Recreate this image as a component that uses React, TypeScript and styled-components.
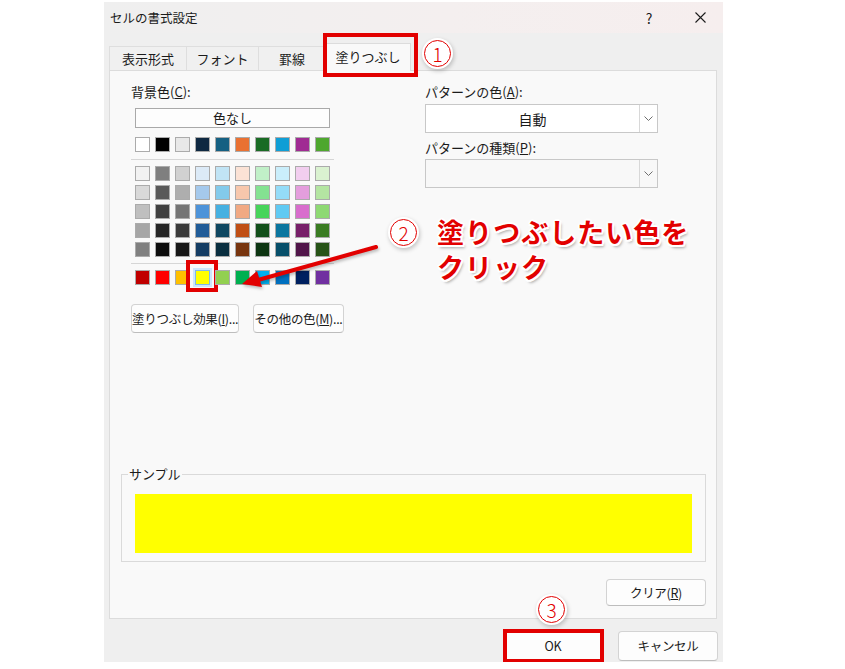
import React from 'react'
import styled, { createGlobalStyle, css } from 'styled-components'

const RED = '#e20000'

const themeColors = [
  ['#FFFFFF', '#F2F2F2', '#D9D9D9', '#BFBFBF', '#A6A6A6', '#808080'],
  ['#000000', '#7F7F7F', '#595959', '#404040', '#262626', '#0D0D0D'],
  ['#E8E8E8', '#D1D1D1', '#AEAEAE', '#757575', '#3A3A3A', '#171717'],
  ['#0E2841', '#DCEAF7', '#A5C9EC', '#4D93D9', '#215C98', '#153D64'],
  ['#156082', '#C1E4F5', '#83CAEB', '#45B0E1', '#0F4761', '#0A2F40'],
  ['#E97132', '#FBE2D5', '#F7C7AC', '#F1A983', '#C04F15', '#78350F'],
  ['#196B24', '#C1F0C8', '#84E291', '#47D45A', '#124F1A', '#0D3512'],
  ['#0F9ED5', '#CAEEFB', '#94DCF8', '#60CAF3', '#0B769F', '#074F6A'],
  ['#A02B93', '#F2CEEF', '#E49EDD', '#D86DCD', '#772069', '#501549'],
  ['#4EA72E', '#DAF2D0', '#B4E5A2', '#8ED973', '#3A7C22', '#275317'],
]

const standardColors = [
  '#C00000', '#FF0000', '#FFC000', '#FFFF00', '#92D050',
  '#00B050', '#00B0F0', '#0070C0', '#002060', '#7030A0',
]

const GlobalStyle = createGlobalStyle`
  html, body {
    margin: 0;
    background: #fff;
  }
  body {
    font-family: 'Noto Sans CJK JP', 'Noto Sans', sans-serif;
    color: #1b1b1b;
  }
`

const Page = styled.div`
  padding: 2px 0 0 104px;
`

const Dialog = styled.div`
  position: relative;
  width: 619px;
  height: 660px;
  display: flex;
  flex-direction: column;
  background: #efefef;
  font-size: 13px;
  line-height: 16px;
`

const TitleBar = styled.div`
  height: 31px;
  display: flex;
  align-items: center;
  padding-left: 6px;
  background: linear-gradient(90deg, #efefef 0%, #f4efef 55%, #f6eeee 100%);
`

const Title = styled.span`
  flex: 1;
  font-size: 12.5px;
`

const TitleButton = styled.div<{ $w: number }>`
  width: ${p => p.$w}px;
  height: 31px;
  display: flex;
  align-items: center;
  justify-content: center;
  font-size: 14px;
`

const TabStrip = styled.div`
  height: 37px;
  box-sizing: border-box;
  display: flex;
  align-items: flex-end;
  padding: 10px 0 0 5px;
`

const Tab = styled.div<{ $w: number; $active?: boolean }>`
  position: relative;
  box-sizing: border-box;
  width: ${p => p.$w}px;
  height: 24px;
  margin-right: -1px;
  display: flex;
  align-items: center;
  justify-content: center;
  border: 1px solid #dedede;
  border-bottom: none;
  background: #f0f0f0;
  ${p =>
    p.$active &&
    css`
      height: 28px;
      margin-bottom: -1px;
      padding-bottom: 1px;
      background: #f9f9f9;
      border-color: #dcdcdc;
      z-index: 1;

      &::after {
        content: '';
        position: absolute;
        left: -3px;
        right: -8px;
        top: -11px;
        bottom: -6px;
        border: 4px solid ${RED};
      }
    `}
`

const Panel = styled.div`
  flex: 1;
  margin: 0 6px 0 5px;
  display: flex;
  flex-direction: column;
  padding: 0 10px 12px 11px;
  background: #f9f9f9;
  border: 1px solid #dcdcdc;
`

const TopArea = styled.div`
  display: grid;
  grid-template-columns: 204px 233px;
  column-gap: 90px;
  align-items: start;
  padding: 13px 0 0 10px;
`

const Column = styled.div`
  display: flex;
  flex-direction: column;
`

const Label = styled.div<{ $gap?: number }>`
  margin-top: ${p => p.$gap ?? 0}px;
  height: 16px;
  white-space: nowrap;
`

const NoColorButton = styled.div`
  box-sizing: border-box;
  width: 195px;
  height: 20px;
  margin: 8px 0 0 4px;
  display: flex;
  align-items: center;
  justify-content: center;
  background: #fdfdfd;
  border: 1px solid #a9a9a9;
`

const SwatchGrid = styled.div<{ $gap: number }>`
  margin: ${p => p.$gap}px 0 0 4px;
  display: grid;
  grid-template-columns: repeat(10, 15px);
  grid-auto-rows: 15px;
  column-gap: 5px;
  row-gap: 4px;
`

const Swatch = styled.div<{ $color: string; $picked?: boolean }>`
  position: relative;
  box-sizing: border-box;
  background: ${p => p.$color};
  border: 1px solid #ababab;
  ${p =>
    p.$picked &&
    css`
      border-color: #7fb8ea;
      box-shadow: 0 0 0 2px #cde6fb;

      &::after {
        content: '';
        position: absolute;
        left: -10px;
        right: -9px;
        top: -11px;
        bottom: -8px;
        border: 4px solid ${RED};
      }
    `}
`

const Separator = styled.div<{ $gap?: number }>`
  width: 203px;
  height: 1px;
  margin-top: ${p => p.$gap ?? 7}px;
  background: #d6d6d6;
`

const ButtonRow = styled.div`
  display: flex;
  gap: 14px;
  margin-top: 19px;
`

const PushButton = styled.div<{ $w: number; $h?: number }>`
  position: relative;
  box-sizing: border-box;
  width: ${p => p.$w}px;
  height: ${p => p.$h ?? 29}px;
  display: flex;
  align-items: center;
  justify-content: center;
  background: #fdfdfd;
  border: 1px solid #d3d3d3;
  border-bottom-color: #bdbdbd;
  border-radius: 4px;
  font-size: 12.5px;
  letter-spacing: -0.3px;
  white-space: nowrap;
`

const Select = styled.div<{ $disabled?: boolean; $gap: number }>`
  box-sizing: border-box;
  height: 29px;
  margin-top: ${p => p.$gap}px;
  display: flex;
  background: ${p => (p.$disabled ? '#f8f8f8' : '#ffffff')};
  border: 1px solid #c8c8c8;
`

const SelectValue = styled.div`
  flex: 1;
  display: flex;
  align-items: center;
  justify-content: center;
  font-size: 14px;
`

const SelectArrow = styled.div`
  width: 17px;
  display: flex;
  align-items: center;
  justify-content: center;
  border-left: 1px solid #d8d8d8;
`

const SampleBox = styled.fieldset`
  margin: auto 0 0;
  padding: 0 13px 8px;
  border: 1px solid #dadada;
  min-width: 0;

  & > legend {
    padding: 0 1px;
    margin-left: -7px;
    line-height: 16px;
  }
`

const SampleFill = styled.div`
  height: 59px;
  margin-top: 12px;
  background: #ffff00;
`

const ClearRow = styled.div`
  display: flex;
  justify-content: flex-end;
  margin-top: 17px;
`

const Footer = styled.div`
  height: 43px;
  box-sizing: border-box;
  display: flex;
  justify-content: flex-end;
  gap: 15px;
  padding: 12px 5px 0 0;
`

const MarkedButton = styled(PushButton)`
  &::after {
    content: '';
    position: absolute;
    left: -1px;
    right: -2px;
    top: -3px;
    bottom: -3px;
    border: 4px solid ${RED};
  }
`

const Marker = styled.div<{ $x: number; $y: number }>`
  position: absolute;
  left: ${p => p.$x}px;
  top: ${p => p.$y}px;
  box-sizing: border-box;
  width: 27px;
  height: 27px;
  display: flex;
  align-items: center;
  justify-content: center;
  border-radius: 50%;
  border: 1.5px solid ${RED};
  background: #fff;
  color: ${RED};
  font-size: 19px;
  font-weight: 300;
  line-height: 1;
  box-shadow: 0 0 0 2px #fff, 1px 2px 4px 2px rgba(0, 0, 0, 0.22);
`

const Callout = styled.div`
  position: absolute;
  left: 333px;
  top: 212px;
  color: ${RED};
  font-size: 27px;
  font-weight: 700;
  line-height: 35px;
  letter-spacing: 1px;
  white-space: nowrap;
  text-shadow: -2px 0 0 #fff, 2px 0 0 #fff, 0 -2px 0 #fff, 0 2px 0 #fff,
    -1.5px -1.5px 0 #fff, 1.5px -1.5px 0 #fff, -1.5px 1.5px 0 #fff,
    1.5px 1.5px 0 #fff, 2px 3px 3px rgba(0, 0, 0, 0.35);
`

const Arrow = styled.svg`
  position: absolute;
  left: 126px;
  top: 238px;
  overflow: visible;
  filter: drop-shadow(1px 2px 1.5px rgba(0, 0, 0, 0.25));
`

const Chevron = () => (
  <svg width="9" height="5" viewBox="0 0 9 5">
    <path d="M0.5 0.5 L4.5 4.5 L8.5 0.5" fill="none" stroke="#6e6e6e" strokeWidth="1" />
  </svg>
)

const App = () => (
  <Page>
    <GlobalStyle />
    <Dialog>
      <TitleBar>
        <Title>セルの書式設定</Title>
        <TitleButton $w={56}>?</TitleButton>
        <TitleButton $w={46}>
          <svg width="11" height="11" viewBox="0 0 11 11">
            <path d="M0.5 0.5 L10.5 10.5 M10.5 0.5 L0.5 10.5" stroke="#1b1b1b" strokeWidth="1.1" />
          </svg>
        </TitleButton>
      </TitleBar>

      <TabStrip>
        <Tab $w={78}>表示形式</Tab>
        <Tab $w={73}>フォント</Tab>
        <Tab $w={68}>罫線</Tab>
        <Tab $w={86} $active>
          塗りつぶし
        </Tab>
      </TabStrip>

      <Panel>
        <TopArea>
          <Column>
            <Label>
              背景色(<u>C</u>):
            </Label>
            <NoColorButton>色なし</NoColorButton>
            <SwatchGrid $gap={9}>
              {themeColors.map(c => (
                <Swatch key={c[0]} $color={c[0]} />
              ))}
            </SwatchGrid>
            <Separator />
            <SwatchGrid $gap={6}>
              {[1, 2, 3, 4, 5].map(row =>
                themeColors.map(c => <Swatch key={`${row}-${c[0]}`} $color={c[row]} />)
              )}
            </SwatchGrid>
            <Separator $gap={6} />
            <SwatchGrid $gap={6}>
              {standardColors.map(c => (
                <Swatch key={c} $color={c} $picked={c === '#FFFF00'} />
              ))}
            </SwatchGrid>
            <ButtonRow>
              <PushButton $w={134}>
                塗りつぶし効果(<u>I</u>)...
              </PushButton>
              <PushButton $w={118}>
                その他の色(<u>M</u>)...
              </PushButton>
            </ButtonRow>
          </Column>

          <Column>
            <Label>
              パターンの色(<u>A</u>):
            </Label>
            <Select $gap={4}>
              <SelectValue>自動</SelectValue>
              <SelectArrow>
                <Chevron />
              </SelectArrow>
            </Select>
            <Label $gap={7}>
              パターンの種類(<u>P</u>):
            </Label>
            <Select $gap={3} $disabled>
              <SelectValue />
              <SelectArrow>
                <Chevron />
              </SelectArrow>
            </Select>
          </Column>
        </TopArea>

        <SampleBox>
          <legend>サンプル</legend>
          <SampleFill />
        </SampleBox>

        <ClearRow>
          <PushButton $w={100} $h={27}>
            クリア(<u>R</u>)
          </PushButton>
        </ClearRow>
      </Panel>

      <Footer>
        <MarkedButton $w={100} $h={30}>
          OK
        </MarkedButton>
        <PushButton $w={100} $h={30}>
          キャンセル
        </PushButton>
      </Footer>

      <Marker $x={320} $y={38}>1</Marker>
      <Marker $x={286} $y={217}>2</Marker>
      <Marker $x={434} $y={594}>3</Marker>

      <Callout>
        塗りつぶしたい色を
        <br />
        クリック
      </Callout>

      <Arrow width="150" height="52" viewBox="0 0 150 52">
        <line x1="146" y1="7" x2="28" y2="40" stroke={RED} strokeWidth="4" strokeLinecap="round" />
        <polygon points="12,44 27,31 32,47" fill={RED} />
      </Arrow>
    </Dialog>
  </Page>
)

export default App
